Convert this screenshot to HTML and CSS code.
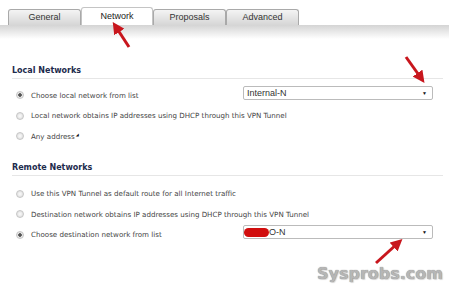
FILE: index.html
```html
<!DOCTYPE html>
<html lang="en">
<head>
    <meta charset="UTF-8">
    <title>VPN Policy - Network</title>
    <link rel="stylesheet" href="styles.css">
</head>
<body>
    <div class="page">
        <div class="tabs">
            <div class="tab">General</div>
            <div class="tab active">Network</div>
            <div class="tab">Proposals</div>
            <div class="tab">Advanced</div>
        </div>
        <div class="tab-strip"></div>

        <div class="section local">
            <h2>Local Networks</h2>
            <div class="row">
                <label><span class="radio checked"></span>Choose local network from list</label>
                <div class="select"><span>Internal-N</span><span class="caret">&#9660;</span></div>
            </div>
            <div class="row">
                <label><span class="radio"></span>Local network obtains IP addresses using DHCP through this VPN Tunnel</label>
            </div>
            <div class="row">
                <label><span class="radio"></span>Any address<sup class="tick">&#9698;</sup></label>
            </div>
        </div>

        <div class="section remote">
            <h2>Remote Networks</h2>
            <div class="row">
                <label><span class="radio"></span>Use this VPN Tunnel as default route for all Internet traffic</label>
            </div>
            <div class="row">
                <label><span class="radio"></span>Destination network obtains IP addresses using DHCP through this VPN Tunnel</label>
            </div>
            <div class="row">
                <label><span class="radio checked"></span>Choose destination network from list</label>
                <div class="select"><span class="blot"></span><span>O-N</span><span class="caret">&#9660;</span></div>
            </div>
        </div>

        <svg class="arrows" width="449" height="287" viewBox="0 0 449 287">
            <defs>
                <marker id="head" markerWidth="4" markerHeight="4" refX="2" refY="2" orient="auto">
                    <path d="M0,0 L4,2 L0,4 Z" fill="#c8161d"/>
                </marker>
            </defs>
            <line x1="129" y1="47" x2="116" y2="27" stroke="#c8161d" stroke-width="3" marker-end="url(#head)"/>
            <line x1="406" y1="57" x2="421" y2="78" stroke="#c8161d" stroke-width="3" marker-end="url(#head)"/>
            <line x1="376" y1="263" x2="398" y2="243" stroke="#c8161d" stroke-width="3" marker-end="url(#head)"/>
        </svg>

        <div class="watermark">Sysprobs.com</div>
    </div>
</body>
</html>
```

FILE: styles.css
```css
body {
    margin: 0;
    background: #fff;
    font-family: "DejaVu Sans", Verdana, sans-serif;
    color: #333;
}

.page {
    position: relative;
    width: 449px;
    height: 287px;
    overflow: hidden;
}

.tabs {
    display: flex;
    align-items: flex-end;
    padding: 7px 0 0 8px;
    height: 18px;
}

.tab {
    width: 73px;
    height: 16px;
    box-sizing: border-box;
    border: 1px solid #a9a9a9;
    border-bottom: none;
    border-radius: 3px 3px 0 0;
    background: linear-gradient(#f4f4f4, #d6d6d6);
    font-family: "Liberation Sans", Arial, sans-serif;
    font-size: 9px;
    color: #333;
    text-align: center;
    line-height: 15px;
}

.tab.active {
    width: 72px;
    height: 18px;
    background: #fff;
    border-color: #c4c4c4;
    line-height: 17px;
    color: #222;
}

.tab-strip {
    height: 14px;
    background: linear-gradient(#d4d4d4, #fff);
}

.section {
    padding: 0 6px 0 12px;
}

.section.local {
    margin-top: 27px;
}

.section.remote {
    margin-top: 16px;
}

.section h2 {
    margin: 0 0 6px;
    padding-bottom: 2px;
    border-bottom: 1px solid #e6e6e6;
    font-size: 8px;
    font-weight: bold;
    color: #1d2b4d;
    line-height: 10px;
}

.section.remote h2 {
    margin-bottom: 8px;
}

.row {
    display: flex;
    align-items: center;
    justify-content: space-between;
    height: 20.5px;
}

.row label {
    display: flex;
    align-items: center;
    font-size: 7.1px;
    color: #444;
}

.radio {
    width: 8px;
    height: 8px;
    box-sizing: border-box;
    margin: 0 7px 0 4px;
    border: 1px solid #c6c6c6;
    border-radius: 50%;
    background: radial-gradient(#fbfbfb, #d8d8d8);
}

.radio.checked {
    background: radial-gradient(circle, #555 0 1.5px, #e6e6e6 2px);
}

.tick {
    font-size: 4px;
    color: #111;
    margin-left: 1px;
    align-self: flex-start;
}

.select {
    display: flex;
    align-items: center;
    width: 190px;
    height: 14px;
    box-sizing: border-box;
    margin: 0 10px 5px 0;
    padding: 0 5px 0 3px;
    border: 1px solid #bbb;
    border-radius: 2px;
    background: #fff;
    font-family: "Liberation Sans", Arial, sans-serif;
    font-size: 9px;
    color: #333;
}

.select .caret {
    margin-left: auto;
    font-size: 5px;
    color: #111;
}

.select .blot {
    width: 25px;
    height: 9px;
    margin-left: -3px;
    border-radius: 5px;
    background: #d10d0d;
}

.arrows {
    position: absolute;
    left: 0;
    top: 0;
}

.watermark {
    position: absolute;
    right: 6px;
    bottom: 4px;
    font-family: "DejaVu Sans", Verdana, sans-serif;
    font-size: 16px;
    font-weight: bold;
    color: #b6b6b6;
    text-shadow: 0 0 1px #777, 1px 1px 1px #ddd;
}
```
